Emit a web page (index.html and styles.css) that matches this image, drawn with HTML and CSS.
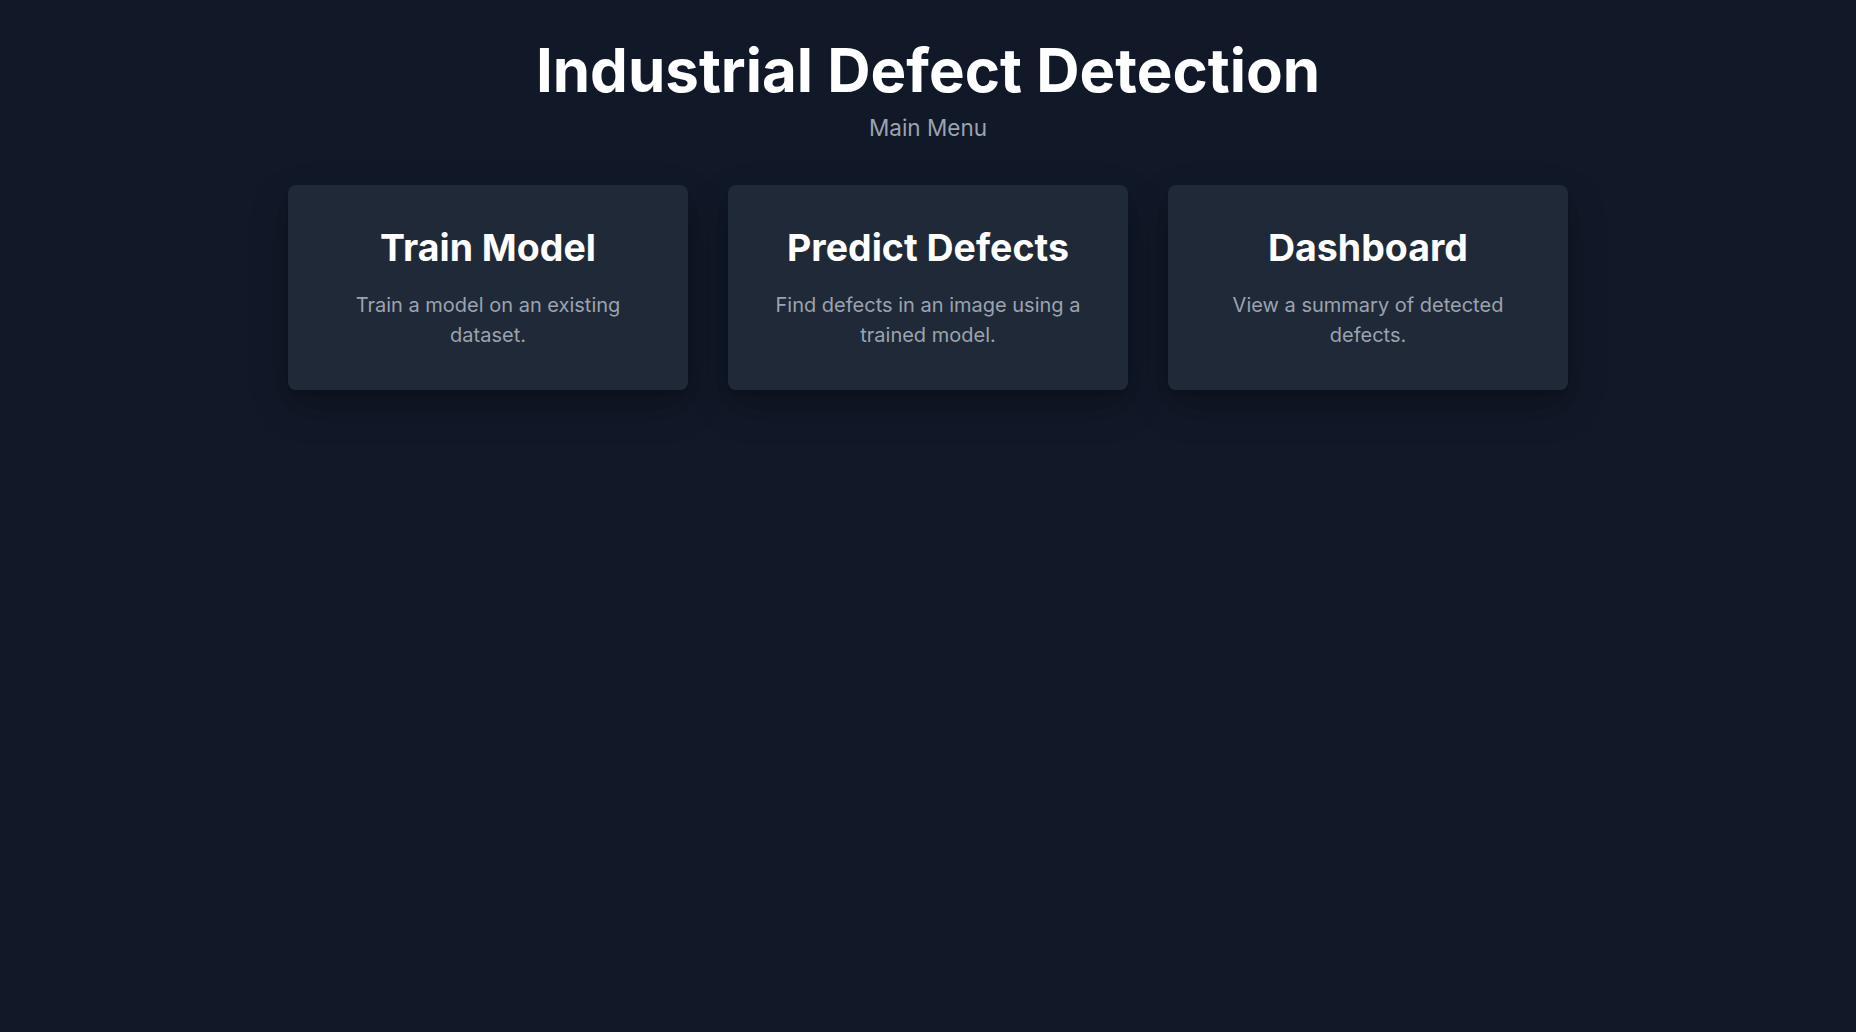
FILE: index.html
```html
<!DOCTYPE html>
<html lang="en">
<head>
<meta charset="utf-8">
<title>Industrial Defect Detection</title>
<link rel="stylesheet" href="styles.css">
</head>
<body>
<main class="page">
  <header class="hero">
    <h1 class="hero-title">Industrial Defect Detection</h1>
    <p class="hero-sub">Main Menu</p>
  </header>
  <section class="menu">
    <a class="card" href="#">
      <h2 class="card-title">Train Model</h2>
      <p class="card-text">Train a model on an existing dataset.</p>
    </a>
    <a class="card" href="#">
      <h2 class="card-title">Predict Defects</h2>
      <p class="card-text">Find defects in an image using a trained model.</p>
    </a>
    <a class="card" href="#">
      <h2 class="card-title">Dashboard</h2>
      <p class="card-text">View a summary of detected defects.</p>
    </a>
  </section>
</main>
</body>
</html>
```

FILE: styles.css
```css
html, body {
  margin: 0;
  padding: 0;
  background: #111827;
  min-height: 100%;
}
body {
  font-family: Inter, "Noto Sans", "Liberation Sans", sans-serif;
  color: #ffffff;
  min-height: 1032px;
}
.page {
  padding: 40px 0;
}
.hero {
  text-align: center;
}
.hero-title {
  margin: 0;
  font-size: 60px;
  line-height: 1;
  font-weight: 700;
}
.hero-sub {
  margin: 13px 0 0;
  font-size: 22.5px;
  line-height: 30px;
  color: #9ca3af;
}
.menu {
  max-width: 1280px;
  margin: 42px auto 0;
  display: grid;
  grid-template-columns: repeat(3, 1fr);
  gap: 40px;
}
.card {
  display: block;
  text-decoration: none;
  background: #1f2937;
  border-radius: 8px;
  padding: 43px 32px 40px;
  text-align: center;
  box-shadow: 0 10px 15px -3px rgba(0,0,0,0.1), 0 4px 6px -4px rgba(0,0,0,0.1), 0 16px 40px rgba(0,0,0,0.2);
}
.card-title {
  margin: 0;
  font-size: 37.5px;
  line-height: 40px;
  font-weight: 700;
  color: #ffffff;
}
.card-text {
  margin: 22px 0 0;
  font-size: 20px;
  line-height: 30px;
  color: #9ca3af;
}
```
